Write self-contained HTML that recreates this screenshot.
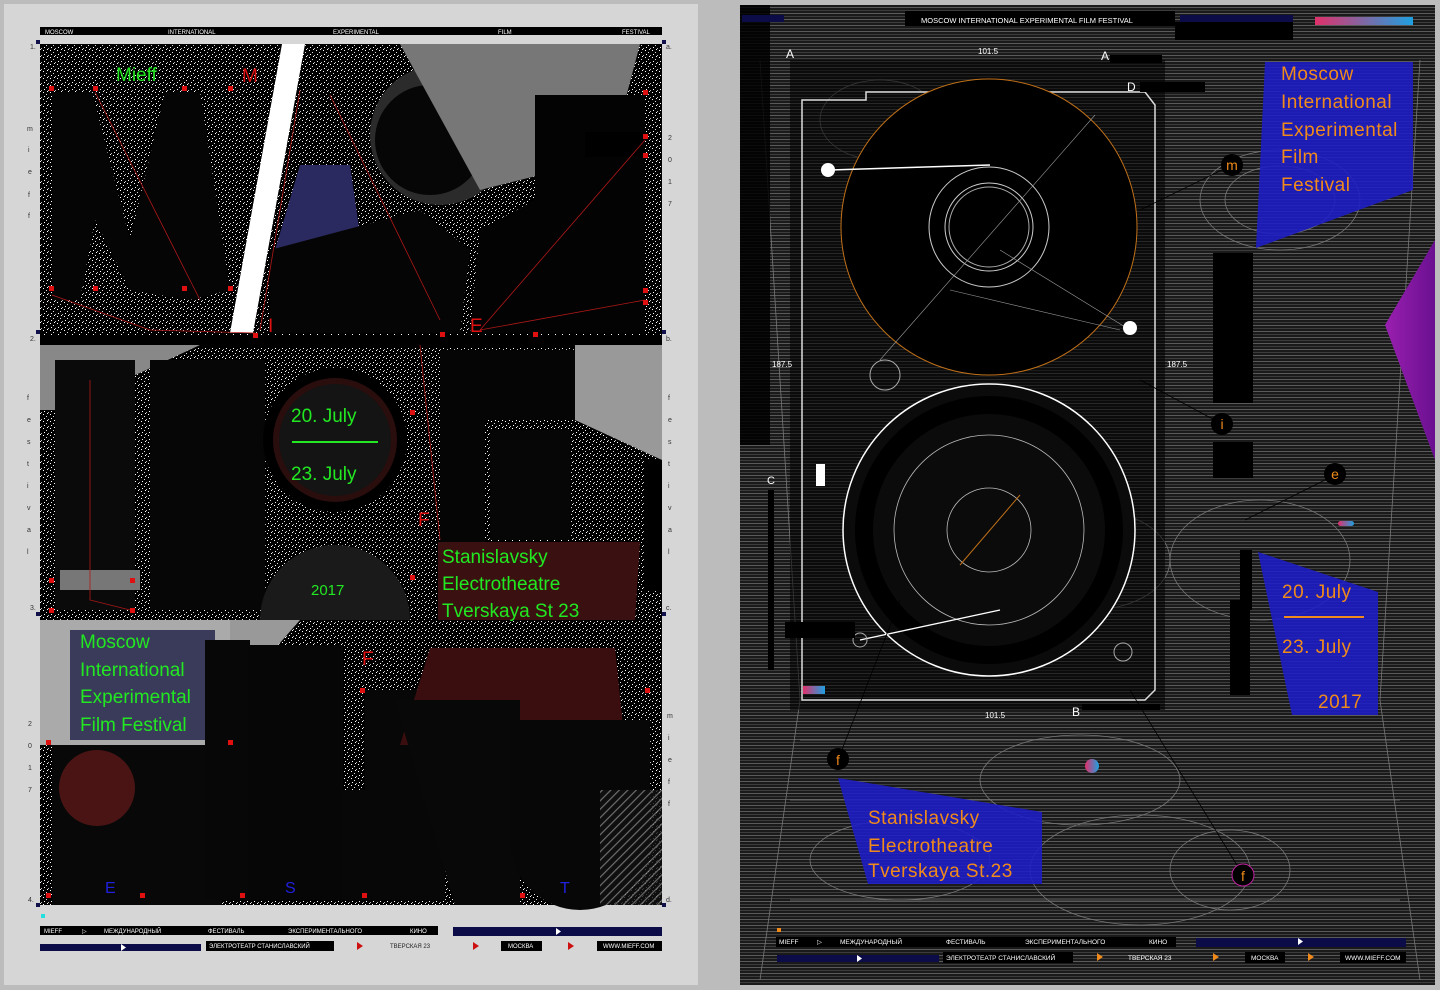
<!DOCTYPE html>
<html><head><meta charset="utf-8"><style>
html,body{margin:0;padding:0;width:1440px;height:990px;overflow:hidden;background:#bcbcbc;font-family:"Liberation Sans",sans-serif}
svg{display:block}
.t{font-family:"Liberation Sans",sans-serif}
</style></head><body>
<svg width="1440" height="990" viewBox="0 0 1440 990" xmlns="http://www.w3.org/2000/svg">
<defs>
<pattern id="sp" width="7" height="7" patternUnits="userSpaceOnUse">
<rect width="7" height="7" fill="#000"/>
<rect x="1" y="1" width="1" height="1" fill="#fff"/><rect x="4" y="3" width="1" height="1" fill="#ddd"/><rect x="2" y="5" width="1" height="1" fill="#fff"/><rect x="6" y="6" width="1" height="1" fill="#bbb"/><rect x="5" y="0" width="1" height="1" fill="#fff"/>
</pattern>
<pattern id="hl" width="10" height="6" patternUnits="userSpaceOnUse">
<rect width="10" height="6" fill="#1a1a1a"/>
<rect y="1" width="10" height="1" fill="#5a5a5a"/><rect y="4" width="10" height="1" fill="#3c3c3c"/>
</pattern>
<pattern id="diag" width="6" height="6" patternUnits="userSpaceOnUse" patternTransform="rotate(-45)">
<rect width="6" height="6" fill="#111"/><rect width="6" height="1.2" fill="#888"/>
</pattern>
<linearGradient id="g1" x1="0" x2="1"><stop offset="0" stop-color="#e0306a"/><stop offset="1" stop-color="#1ea0e0"/></linearGradient>
<linearGradient id="pu" x1="0" x2="1"><stop offset="0" stop-color="#9a1fb0"/><stop offset="1" stop-color="#6a1090"/></linearGradient>
</defs>

<rect x="4" y="4" width="694" height="981" fill="#d6d6d6"/>
<rect x="40" y="27" width="622" height="8" fill="#000"/>
<g class="t" font-size="6" fill="#fff"><text x="45" y="34">MOSCOW</text><text x="168" y="34">INTERNATIONAL</text><text x="333" y="34">EXPERIMENTAL</text><text x="498" y="34">FILM</text><text x="622" y="34">FESTIVAL</text></g>
<rect x="40" y="44" width="622" height="861" fill="url(#sp)"/>
<polygon points="52,92 92,92 130,240 165,92 200,92 230,290 190,300 130,290 95,220 80,300 52,300" fill="#050505"/>
<polygon points="282,44 305,44 253,333 230,333" fill="#fff"/>
<polygon points="300,165 350,165 365,270 275,250" fill="#2a2a60"/>
<polygon points="270,250 420,210 470,250 460,333 270,333" fill="#050505"/>
<circle cx="440" cy="135" r="70" fill="#2b2b2b"/>
<circle cx="430" cy="140" r="55" fill="#060606"/>
<polygon points="400,44 640,44 620,120 560,170 480,190" fill="#777"/>
<polygon points="535,95 645,95 645,333 470,333 480,230 535,200" fill="#030303"/>
<rect x="585" y="132" width="60" height="25" fill="#000"/>
<rect x="40" y="335" width="622" height="12" fill="#000"/>
<polygon points="40,345 200,345 60,410 40,410" fill="#888"/>
<rect x="55" y="360" width="80" height="250" fill="#0a0a0a"/>
<rect x="150" y="360" width="115" height="250" fill="#060606"/>
<rect x="60" y="570" width="80" height="20" fill="#777"/>
<circle cx="335" cy="440" r="72" fill="#000"/>
<circle cx="335" cy="440" r="62" fill="#2a0d0d"/>
<circle cx="335" cy="440" r="56" fill="#141414"/>
<path d="M260,620 A75,75 0 0 1 410,620 Z" fill="#1a1a1a"/>
<rect x="440" y="350" width="45" height="200" fill="#050505"/>
<rect x="485" y="350" width="90" height="70" fill="#050505"/>
<rect x="490" y="430" width="80" height="110" fill="#060606"/>
<polygon points="575,345 662,345 662,460 575,420" fill="#999"/>
<rect x="645" y="460" width="17" height="130" fill="#000"/>
<polygon points="438,542 640,542 635,620 438,620" fill="#3a1010"/>
<polygon points="40,620 230,620 230,745 40,745" fill="#aaa"/>
<polygon points="70,630 215,630 215,740 70,740" fill="#3a3a5a"/>
<polygon points="230,620 300,620 230,700" fill="#999"/>
<rect x="52" y="745" width="170" height="160" fill="#080808"/>
<circle cx="97" cy="788" r="38" fill="#4a1414"/>
<rect x="205" y="640" width="45" height="260" fill="#070707"/>
<rect x="205" y="790" width="160" height="110" fill="#070707"/>
<rect x="248" y="645" width="95" height="255" fill="#060606"/>
<rect x="365" y="690" width="80" height="210" fill="#070707"/>
<polygon points="430,648 615,648 625,745 400,745" fill="#3a0e0e"/>
<path d="M395,700 L520,700 L520,905 L455,905 Z" fill="#080808"/>
<path d="M510,720 L650,720 L650,840 A70,70 0 0 1 510,840 Z" fill="#070707"/>
<rect x="600" y="790" width="62" height="115" fill="url(#diag)" opacity="0.8"/>
<g stroke="#b01818" stroke-width="0.8" fill="none">
<path d="M52,295 L150,330 L255,333"/><path d="M95,92 L200,300"/><path d="M300,90 L260,330"/><path d="M330,95 L440,320"/><path d="M480,330 L645,140"/><path d="M480,330 L645,300"/>
<path d="M420,345 L440,540"/><path d="M90,380 L90,600 L130,610"/>
</g>
<g fill="#e01010">
<rect x="49" y="86" width="5" height="5"/><rect x="93" y="86" width="5" height="5"/><rect x="182" y="86" width="5" height="5"/><rect x="228" y="86" width="5" height="5"/><rect x="49" y="286" width="5" height="5"/><rect x="93" y="286" width="5" height="5"/><rect x="182" y="286" width="5" height="5"/><rect x="228" y="286" width="5" height="5"/>
<rect x="643" y="90" width="5" height="5"/><rect x="643" y="134" width="5" height="5"/><rect x="643" y="153" width="5" height="5"/><rect x="643" y="288" width="5" height="5"/><rect x="643" y="300" width="5" height="5"/><rect x="440" y="332" width="5" height="5"/><rect x="533" y="332" width="5" height="5"/><rect x="253" y="333" width="5" height="5"/>
<rect x="49" y="578" width="5" height="5"/><rect x="130" y="578" width="5" height="5"/><rect x="49" y="608" width="5" height="5"/><rect x="130" y="608" width="5" height="5"/><rect x="410" y="410" width="5" height="5"/><rect x="410" y="575" width="5" height="5"/>
<rect x="46" y="740" width="5" height="5"/><rect x="228" y="740" width="5" height="5"/><rect x="46" y="893" width="5" height="5"/><rect x="140" y="893" width="5" height="5"/><rect x="240" y="893" width="5" height="5"/><rect x="362" y="893" width="5" height="5"/><rect x="520" y="893" width="5" height="5"/><rect x="645" y="688" width="5" height="5"/><rect x="360" y="688" width="5" height="5"/>
</g>
<g class="t" fill="#22e822" font-size="19">
<text x="116" y="81">Mieff</text>
<text x="291" y="422">20.  July</text><text x="291" y="480">23.  July</text>
<text x="442" y="563">Stanislavsky</text><text x="442" y="590">Electrotheatre</text><text x="442" y="617">Tverskaya  St  23</text>
<text x="80" y="648">Moscow</text><text x="80" y="676">International</text><text x="80" y="703">Experimental</text><text x="80" y="731">Film Festival</text>
<text x="311" y="595" font-size="15">2017</text>
</g>
<rect x="292" y="441" width="86" height="2" fill="#22e822"/>
<g class="t" fill="#e01010" font-size="19"><text x="242" y="82">M</text><text x="268" y="332">I</text><text x="470" y="332">E</text><text x="418" y="526">F</text><text x="362" y="665">F</text></g>
<g class="t" fill="#2020e0" font-size="16"><text x="105" y="893">E</text><text x="285" y="893">S</text><text x="560" y="893">T</text></g>
<g class="t" font-size="7" fill="#333">
<text x="30" y="49">1.</text><text x="30" y="341">2.</text><text x="30" y="610">3.</text><text x="28" y="902">4.</text>
<text x="666" y="49">a.</text><text x="666" y="341">b.</text><text x="666" y="610">c.</text><text x="666" y="902">d.</text>
<text x="27" y="131">m</text><text x="28" y="152">i</text><text x="28" y="174">e</text><text x="28" y="197">f</text><text x="28" y="218">f</text>
<text x="668" y="140">2</text><text x="668" y="162">0</text><text x="668" y="184">1</text><text x="668" y="206">7</text>
<text x="27" y="400">f</text><text x="27" y="422">e</text><text x="27" y="444">s</text><text x="27" y="466">t</text><text x="27" y="488">i</text><text x="27" y="510">v</text><text x="27" y="532">a</text><text x="27" y="554">l</text>
<text x="668" y="400">f</text><text x="668" y="422">e</text><text x="668" y="444">s</text><text x="668" y="466">t</text><text x="668" y="488">i</text><text x="668" y="510">v</text><text x="668" y="532">a</text><text x="668" y="554">l</text>
<text x="28" y="726">2</text><text x="28" y="748">0</text><text x="28" y="770">1</text><text x="28" y="792">7</text>
<text x="667" y="718">m</text><text x="668" y="740">i</text><text x="668" y="762">e</text><text x="668" y="784">f</text><text x="668" y="806">f</text>
</g>
<g fill="#10104a"><rect x="36" y="40" width="4" height="4"/><rect x="662" y="40" width="4" height="4"/><rect x="36" y="330" width="4" height="4"/><rect x="662" y="330" width="4" height="4"/><rect x="36" y="612" width="4" height="4"/><rect x="662" y="612" width="4" height="4"/><rect x="36" y="903" width="4" height="4"/><rect x="662" y="903" width="4" height="4"/></g>
<rect x="41" y="914" width="4" height="4" fill="#20e0e0"/>
<rect x="40" y="926" width="398" height="9" fill="#000"/>
<g class="t" font-size="6" fill="#fff"><text x="44" y="933">MIEFF</text><text x="82" y="933">▷</text><text x="104" y="933">МЕЖДУНАРОДНЫЙ</text><text x="208" y="933">ФЕСТИВАЛЬ</text><text x="288" y="933">ЭКСПЕРИМЕНТАЛЬНОГО</text><text x="410" y="933">КИНО</text></g>
<rect x="453" y="927" width="209" height="9" fill="#0c0c48"/><polygon points="556,928 561,931.5 556,935" fill="#fff"/>
<rect x="40" y="944" width="161" height="7" fill="#0c0c48"/><polygon points="121,944 126,947.5 121,951" fill="#fff"/>
<rect x="206" y="941" width="128" height="10" fill="#000"/>
<g class="t" font-size="6" fill="#fff"><text x="209" y="948">ЭЛЕКТРОТЕАТР  СТАНИСЛАВСКИЙ</text></g>
<g fill="#cc1010"><polygon points="357,942 363,946 357,950"/><polygon points="473,942 479,946 473,950"/><polygon points="568,942 574,946 568,950"/></g>
<g class="t" font-size="6" fill="#222"><text x="390" y="948">ТВЕРСКАЯ    23</text></g>
<rect x="501" y="941" width="41" height="10" fill="#000"/><text class="t" x="508" y="948" font-size="6" fill="#fff">МОСКВА</text>
<rect x="597" y="941" width="65" height="10" fill="#000"/><text class="t" x="603" y="948" font-size="6" fill="#fff">WWW.MIEFF.COM</text>

<rect x="740" y="5" width="695" height="980" fill="url(#hl)"/>
<g stroke="#777" stroke-width="0.8" fill="none">
<path d="M760,60 L800,700 L760,980"/><path d="M1420,60 L1380,700 L1420,980"/>
<ellipse cx="1280" cy="200" rx="80" ry="50"/><ellipse cx="1280" cy="200" rx="55" ry="34"/>
<ellipse cx="1080" cy="780" rx="100" ry="45"/><ellipse cx="1260" cy="560" rx="90" ry="60"/><ellipse cx="1140" cy="870" rx="110" ry="55"/>
<ellipse cx="900" cy="860" rx="90" ry="40"/><ellipse cx="1230" cy="870" rx="60" ry="40"/>
<ellipse cx="1090" cy="560" rx="80" ry="50"/><ellipse cx="880" cy="120" rx="60" ry="40"/>
<path d="M800,740 L1400,740"/><path d="M790,800 L1400,800"/><path d="M790,900 L1400,900"/>
</g>
<rect x="740" y="5" width="30" height="440" fill="#000" opacity="0.85"/>
<rect x="742" y="15" width="42" height="7" fill="#0c0c48"/>
<rect x="905" y="11" width="270" height="15" fill="#000"/>
<g class="t" font-size="7.5" fill="#fff"><text x="921" y="23">MOSCOW   INTERNATIONAL   EXPERIMENTAL   FILM   FESTIVAL</text></g>
<rect x="1180" y="15" width="113" height="7" fill="#0c0c48"/>
<rect x="1175" y="22" width="118" height="18" fill="#000"/>
<rect x="1315" y="17" width="98" height="8" fill="url(#g1)"/>
<rect x="790" y="60" width="375" height="650" fill="#000" opacity="0.55"/>
<path d="M802,100 L866,100 L866,92 L1145,92 L1155,105 L1155,690 L1145,700 L802,700 Z" fill="none" stroke="#ddd" stroke-width="1.5"/>
<circle cx="989" cy="227" r="148" fill="#000" stroke="#c07018" stroke-width="1"/>
<circle cx="989" cy="227" r="60" fill="none" stroke="#ccc"/>
<circle cx="989" cy="227" r="44" fill="none" stroke="#ccc"/><circle cx="989" cy="227" r="40" fill="none" stroke="#aaa"/>
<path d="M830,170 L990,165" stroke="#fff" stroke-width="1.5"/>
<path d="M880,360 L1095,115 M1000,250 L1130,330 M950,290 L1120,330" stroke="#999" stroke-width="0.6"/>
<circle cx="828" cy="170" r="7" fill="#fff"/><circle cx="1130" cy="328" r="7" fill="#fff"/>
<circle cx="989" cy="530" r="146" fill="#0b0b0b" stroke="#fff" stroke-width="1.5"/>
<circle cx="989" cy="530" r="125" fill="none" stroke="#000" stroke-width="18"/>
<circle cx="989" cy="530" r="95" fill="none" stroke="#bbb" stroke-width="0.8"/>
<circle cx="989" cy="530" r="42" fill="none" stroke="#bbb" stroke-width="0.8"/>
<path d="M960,565 L1020,495" stroke="#c07018"/>
<path d="M860,640 L1000,610" stroke="#fff" stroke-width="1.3"/>
<circle cx="860" cy="640" r="7" fill="none" stroke="#aaa"/><circle cx="1123" cy="652" r="9" fill="none" stroke="#aaa"/>
<circle cx="885" cy="375" r="15" fill="none" stroke="#aaa"/>
<rect x="785" y="622" width="70" height="16" fill="#000"/>
<rect x="816" y="464" width="9" height="22" fill="#fff"/>
<rect x="803" y="686" width="22" height="8" fill="url(#g1)"/>
<g class="t" font-size="12" fill="#fff"><text x="786" y="58">A</text><text x="1101" y="60">A</text><text x="1127" y="91">D</text><text x="1072" y="716">B</text><text x="767" y="484" font-size="11">C</text></g>
<rect x="1110" y="55" width="52" height="8" fill="#000"/><rect x="1140" y="82" width="65" height="10" fill="#000"/><rect x="1082" y="704" width="78" height="6" fill="#000"/>
<g class="t" font-size="8" fill="#fff"><text x="978" y="54">101.5</text><text x="985" y="718">101.5</text><text x="772" y="367">187.5</text><text x="1167" y="367">187.5</text></g>
<rect x="1213" y="253" width="40" height="150" fill="#000"/>
<rect x="1213" y="442" width="40" height="36" fill="#000"/>
<rect x="1230" y="600" width="20" height="95" fill="#000"/><rect x="1240" y="550" width="12" height="60" fill="#000"/>
<rect x="768" y="490" width="6" height="180" fill="#000"/>
<polygon points="1265,62 1413,62 1413,190 1256,248" fill="#1c1cc8" opacity="0.88"/>
<polygon points="1258,552 1378,592 1378,715 1292,715" fill="#1c1cc8" opacity="0.88"/>
<polygon points="838,778 1042,812 1042,884 868,884" fill="#1c1cc8" opacity="0.88"/>
<polygon points="1385,325 1435,240 1435,460" fill="url(#pu)"/>
<g class="t" fill="#f08a1a" font-size="19" letter-spacing="0.5">
<text x="1281" y="80">Moscow</text><text x="1281" y="108">International</text><text x="1281" y="136">Experimental</text><text x="1281" y="163">Film</text><text x="1281" y="191">Festival</text>
<text x="1282" y="598">20.  July</text><text x="1282" y="653">23.  July</text><text x="1318" y="708">2017</text>
<text x="868" y="824">Stanislavsky</text><text x="868" y="852">Electrotheatre</text><text x="868" y="877">Tverskaya  St.23</text>
</g>
<rect x="1284" y="616" width="80" height="2" fill="#f08a1a"/>
<g stroke="#000" stroke-width="0.8"><path d="M1232,165 L1140,210"/><path d="M1222,424 L1140,380"/><path d="M1335,475 L1245,520"/><path d="M838,760 L900,600"/><path d="M1243,875 L1130,690"/></g>
<g><circle cx="1232" cy="165" r="11" fill="#000"/><circle cx="1222" cy="424" r="11" fill="#000"/><circle cx="1335" cy="474" r="11" fill="#000"/><circle cx="838" cy="759" r="11" fill="#000"/><circle cx="1243" cy="875" r="11" fill="#000" stroke="#c020a0"/></g>
<g class="t" fill="#f08a1a" font-size="14" text-anchor="middle"><text x="1232" y="170">m</text><text x="1222" y="429">i</text><text x="1335" y="479">e</text><text x="838" y="765">f</text><text x="1243" y="881">f</text></g>
<circle cx="1092" cy="766" r="7" fill="url(#g1)"/>
<rect x="1338" y="521" width="16" height="5" rx="2.5" fill="url(#g1)"/>
<rect x="777" y="928" width="4" height="4" fill="#f08a1a"/>
<rect x="776" y="937" width="400" height="10" fill="#000"/>
<g class="t" font-size="6.5" fill="#fff"><text x="779" y="944">MIEFF</text><text x="817" y="944">▷</text><text x="840" y="944">МЕЖДУНАРОДНЫЙ</text><text x="946" y="944">ФЕСТИВАЛЬ</text><text x="1025" y="944">ЭКСПЕРИМЕНТАЛЬНОГО</text><text x="1149" y="944">КИНО</text></g>
<rect x="1196" y="938" width="210" height="9" fill="#0c0c48"/><polygon points="1298,938 1303,941.5 1298,945" fill="#fff"/>
<rect x="777" y="955" width="162" height="7" fill="#0c0c48"/><polygon points="857,955 862,958.5 857,962" fill="#fff"/>
<rect x="943" y="952" width="130" height="11" fill="#000"/>
<g class="t" font-size="6.5" fill="#fff"><text x="946" y="960">ЭЛЕКТРОТЕАТР  СТАНИСЛАВСКИЙ</text><text x="1128" y="960">ТВЕРСКАЯ    23</text></g>
<g fill="#f08a1a"><polygon points="1097,953 1103,957 1097,961"/><polygon points="1213,953 1219,957 1213,961"/><polygon points="1308,953 1314,957 1308,961"/></g>
<rect x="1245" y="952" width="40" height="11" fill="#000"/><text class="t" x="1251" y="960" font-size="6.5" fill="#fff">МОСКВА</text>
<rect x="1340" y="952" width="66" height="11" fill="#000"/><text class="t" x="1345" y="960" font-size="6.5" fill="#fff">WWW.MIEFF.COM</text>
</svg>
</body></html>
